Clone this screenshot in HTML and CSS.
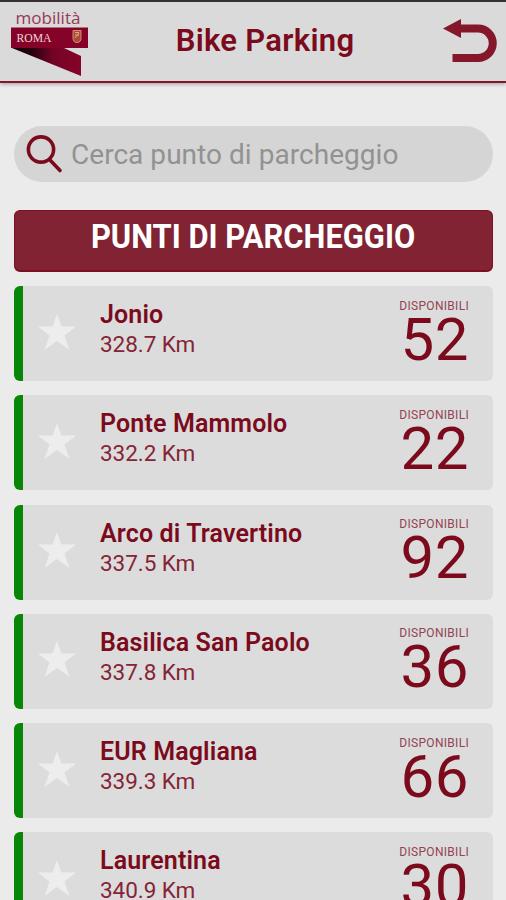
FILE: index.html
```
<!DOCTYPE html>
<html lang="it">
<head>
<meta charset="utf-8">
<title>Bike Parking</title>
<link rel="stylesheet" href="styles.css">
</head>
<body>
<svg class="defs" width="0" height="0"><symbol id="star" viewBox="0 0 38 36"><path d="M19 0 23.5 12.5H38L26.5 21.5 31.5 36 19 27 6.5 36 11.5 21.5 0 12.5H14.5Z"/></symbol></svg>
<header class="topbar">
  <svg class="logo" viewBox="0 0 80 70" role="img" aria-label="mobilità Roma">
    <defs><linearGradient id="fold" x1="0" y1="0" x2="1" y2="0"><stop offset="0" stop-color="#130006"/><stop offset=".28" stop-color="#25000d"/><stop offset=".6" stop-color="#750426"/><stop offset="1" stop-color="#850328"/></linearGradient></defs>
    <path d="M2 41 71 69V49L54 41Z" fill="url(#fold)"/>
    <path d="M1 20.5H78V41H1Z" fill="#850328"/>
    <text class="logo-name" x="5.5" y="17" textLength="65" lengthAdjust="spacingAndGlyphs">mobilità</text>
    <text class="logo-city" x="6.5" y="35" textLength="35" lengthAdjust="spacingAndGlyphs">ROMA</text>
    <path d="M63 23.5H71V31Q71 35.5 67 35.5Q63 35.5 63 31Z" fill="#aa493d" stroke="#d79b72" stroke-width=".9"/>
    <path d="M65 25.5H69M65 28H69M65 31L69 26" stroke="#edc28b" stroke-width=".8"/>
  </svg>
  <h1 class="title">Bike Parking</h1>
  <svg class="back" viewBox="0 0 54 44" role="img" aria-label="Indietro"><path class="arc" d="M17 9.500H35A14.700 14.700 0 0 1 35 39H9.500"/><path class="head" d="M0 9.500 18 0V19Z"/></svg>
</header>
<main class="content">
  <div class="search">
    <svg class="lens" viewBox="0 0 38 40"><circle cx="15" cy="15.500" r="12.600"/><path d="M23.500 25.500 34 36.500"/></svg>
    <span class="placeholder">Cerca punto di parcheggio</span>
  </div>
  <h2 class="heading"><span>PUNTI DI PARCHEGGIO</span></h2>
  <ul class="list">
    <li class="card"><svg class="star"><use href="#star"/></svg><div class="place"><strong>Jonio</strong><span>328.7 Km</span></div><div class="free"><small>DISPONIBILI</small><b>52</b></div></li>
    <li class="card"><svg class="star"><use href="#star"/></svg><div class="place"><strong>Ponte Mammolo</strong><span>332.2 Km</span></div><div class="free"><small>DISPONIBILI</small><b>22</b></div></li>
    <li class="card"><svg class="star"><use href="#star"/></svg><div class="place"><strong>Arco di Travertino</strong><span>337.5 Km</span></div><div class="free"><small>DISPONIBILI</small><b>92</b></div></li>
    <li class="card"><svg class="star"><use href="#star"/></svg><div class="place"><strong>Basilica San Paolo</strong><span>337.8 Km</span></div><div class="free"><small>DISPONIBILI</small><b>36</b></div></li>
    <li class="card"><svg class="star"><use href="#star"/></svg><div class="place"><strong>EUR Magliana</strong><span>339.3 Km</span></div><div class="free"><small>DISPONIBILI</small><b>66</b></div></li>
    <li class="card"><svg class="star"><use href="#star"/></svg><div class="place"><strong>Laurentina</strong><span>340.9 Km</span></div><div class="free"><small>DISPONIBILI</small><b>30</b></div></li>
  </ul>
</main>
</body>
</html>
```

FILE: styles.css
```
* { box-sizing: border-box; }
html, body { height: 900px; overflow: hidden; }
body {
  margin: 0;
  background: #ebebeb;
  color: #7b0b1c;
  font-family: Roboto, "Liberation Sans", sans-serif;
}
.defs { display: block; }
.topbar {
  display: grid;
  grid-template-columns: 80px 1fr 54px;
  align-items: start;
  height: 83px;
  padding: 0 9px 0 10px;
  background: #dadada;
  border-top: 2px solid #353132;
  border-bottom: 2px solid #84172a;
  box-shadow: 0 1px 4px #0005;
}
.logo { width: 80px; height: 70px; margin-top: 5px; overflow: visible; }
.logo-name { font: 400 16.5px "Open Sans", sans-serif; fill: #963954; }
.logo-city { font: 400 13px "Liberation Serif", serif; fill: #f0d5d4; }
.title {
  margin: 20px 0 0 -3px;
  font-size: 31px;
  line-height: 38px;
  font-weight: 600;
  text-align: center;
  letter-spacing: .3px;
}
.back { width: 54px; height: 44px; margin-top: 17px; }
.arc { fill: none; stroke: #84172a; stroke-width: 8; }
.head { fill: #84172a; }
.content { padding: 43px 13px 0 14px; }
.search {
  display: flex;
  align-items: center;
  height: 56px;
  padding-left: 12px;
  border-radius: 28px;
  background: #d5d5d5;
}
.lens { width: 38px; height: 40px; fill: none; stroke: #7b0b1c; stroke-width: 3.6; stroke-linecap: round; }
.placeholder { margin: 1px 0 0 7px; font-size: 28px; line-height: 36px; color: #929292; white-space: nowrap; letter-spacing: .04px; }
.heading {
  height: 62px;
  margin: 28px 0 14px;
  padding-top: 8px;
  border: 1px solid #7a1022;
  border-bottom-width: 2px;
  border-radius: 6px;
  background: #812333;
  color: #fff;
  font-size: 33px;
  line-height: 36px;
  text-align: center;
  white-space: nowrap;
}
.heading span { display: inline-block; transform: scaleX(.937); }
.list { display: grid; gap: 14.3px; margin: 0; padding: 0; list-style: none; }
.card {
  display: flex;
  height: 95px;
  padding-right: 24px;
  border-left: 9px solid #078607;
  border-radius: 6px;
  background: #dcdcdc;
}
.star { width: 38px; height: 36px; margin: 27.5px 0 0 15px; fill: #ededed; }
.place { display: flex; flex-direction: column; margin: 14px 0 0 24px; white-space: nowrap; }
.place strong { font-size: 25px; line-height: 30px; font-weight: 600; letter-spacing: .14px; }
.place span { margin-top: -1px; font-size: 22.5px; line-height: 30px; color: #852436; letter-spacing: -.05px; }
.free { display: flex; flex-direction: column; align-items: flex-end; margin: 12.6px 0 0 auto; }
.free small { font-size: 12px; line-height: 14px; color: #934353; letter-spacing: .3px; }
.free b { font-size: 60px; line-height: 60px; margin-top: -3px; font-weight: 400; letter-spacing: .5px; }
```
